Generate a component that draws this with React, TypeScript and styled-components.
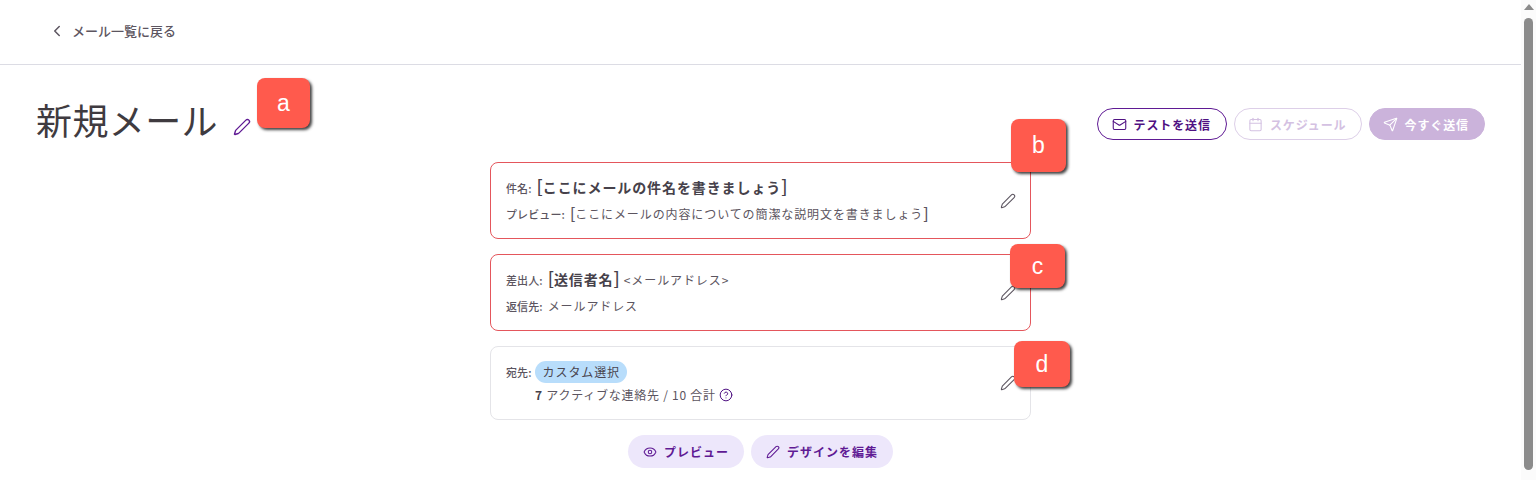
import styled, { createGlobalStyle } from 'styled-components';
import { Calendar, ChevronLeft, CircleHelp, Eye, Mail, Pen, Send } from 'lucide-react';

const GlobalStyle = createGlobalStyle`
  html, body {
    margin: 0;
    padding: 0;
    height: 480px;
    overflow: hidden;
    background: #ffffff;
  }
  * {
    box-sizing: border-box;
  }
  body {
    font-family: "Noto Sans CJK JP", sans-serif;
    color: #4a4550;
  }
`;

const Page = styled.div`
  display: flex;
  height: 480px;
  overflow: hidden;
`;

const Main = styled.main`
  position: relative;
  flex: 1;
  min-width: 0;
`;

const TopBar = styled.div`
  display: flex;
  align-items: center;
  height: 65px;
  padding: 0 0 3px 48px;
  border-bottom: 1px solid #dcdce4;
`;

const BackLink = styled.a`
  display: flex;
  align-items: center;
  gap: 6px;
  font-size: 13px;
  font-weight: 500;
  color: #5c5560;
`;

const HeadRow = styled.div`
  display: flex;
  justify-content: space-between;
  align-items: flex-start;
  height: 97px;
  padding: 32px 36px 0;
`;

const TitleGroup = styled.div`
  display: flex;
  align-items: center;
  gap: 15px;
`;

const Title = styled.h1`
  margin: 0;
  font-size: 36px;
  line-height: 44px;
  font-weight: 400;
  letter-spacing: 0.4px;
  color: #3f3b40;
`;

const TitleEdit = styled.span`
  display: flex;
  margin-top: 16px;
  color: #5f1a94;
`;

const Actions = styled.div`
  display: flex;
  gap: 7px;
  margin-top: 11px;
`;

const ActionButton = styled.button<{ $variant: 'outline' | 'muted' | 'solid' }>`
  display: flex;
  align-items: center;
  gap: ${(p) => (p.$variant === 'solid' ? 6 : 7)}px;
  height: 32px;
  padding: 0 15px 0 ${(p) => (p.$variant === 'outline' ? 14 : 13)}px;
  border-radius: 16px;
  font-family: inherit;
  font-size: 12px;
  font-weight: 700;
  letter-spacing: 0.9px;
  background: ${(p) => (p.$variant === 'solid' ? '#cbb3db' : '#ffffff')};
  color: ${(p) => (p.$variant === 'outline' ? '#4f1182' : p.$variant === 'muted' ? '#d4c1e2' : '#ffffff')};
  border: 1px solid ${(p) => (p.$variant === 'outline' ? '#5f1a94' : p.$variant === 'muted' ? '#ddcfe8' : '#cbb3db')};
`;

const Center = styled.div`
  display: flex;
  flex-direction: column;
  align-items: center;
`;

const Card = styled.section<{ $error?: boolean; $height: number }>`
  display: flex;
  align-items: center;
  justify-content: space-between;
  width: 541px;
  height: ${(p) => p.$height}px;
  margin-bottom: 15px;
  padding: 0 14px 0 15px;
  border-radius: 8px;
  background: #ffffff;
  border: 1px solid ${(p) => (p.$error ? '#e4565c' : '#e4e4e8')};
`;

const CardBody = styled.div<{ $gap: number }>`
  display: flex;
  flex-direction: column;
  gap: ${(p) => p.$gap}px;
`;

const Row = styled.div`
  display: flex;
  align-items: center;
  gap: 5px;
  height: 22px;
`;

const Label = styled.span`
  font-size: 11px;
  font-weight: 500;
  letter-spacing: 0.1px;
  color: #5c5560;
`;

const Strong = styled.span`
  font-size: 14px;
  line-height: 20px;
  margin-top: -1px;
  font-weight: 700;
  letter-spacing: 0.9px;
  color: #46414a;
`;

const Value = styled.span`
  font-size: 12px;
  line-height: 18px;
  letter-spacing: 0.9px;
  color: #5c5560;
`;

const Address = styled(Value)`
  margin-left: -1px;
`;

const Bracket = styled.span`
  font-size: 1.25em;
  line-height: 1;
  font-weight: 500;
  letter-spacing: 0;
`;

const Chip = styled.span`
  display: flex;
  align-items: center;
  height: 22px;
  margin-left: -2px;
  padding: 0 7px 0 8px;
  border-radius: 11px;
  background: #b8ddfb;
  font-size: 12px;
  letter-spacing: 0.9px;
  color: #4a4550;
`;

const Stats = styled.div`
  display: flex;
  align-items: center;
  gap: 3px;
  height: 22px;
  padding-left: 29px;
  font-size: 12px;
  letter-spacing: 0.75px;
  color: #5c5560;

  b {
    font-weight: 700;
    color: #46414a;
  }
`;

const HelpIcon = styled.span`
  display: flex;
  color: #4f1182;
`;

const EditIcon = styled.span`
  display: flex;
  color: #5c5560;
`;

const Footer = styled.div`
  display: flex;
  gap: 7px;
`;

const SoftButton = styled.button`
  display: flex;
  align-items: center;
  gap: 7px;
  height: 33px;
  padding: 0 15px;
  border: none;
  border-radius: 17px;
  background: #ede7fb;
  font-family: inherit;
  font-size: 12px;
  font-weight: 700;
  letter-spacing: 1px;
  color: #5f1a94;
`;

const Badge = styled.div<{ $left: number; $top: number; $w: number; $h: number }>`
  position: absolute;
  left: ${(p) => p.$left}px;
  top: ${(p) => p.$top}px;
  width: ${(p) => p.$w}px;
  height: ${(p) => p.$h}px;
  display: flex;
  align-items: center;
  justify-content: center;
  border-radius: 8px;
  background: #ff5a4d;
  box-shadow: 2px 2px 3px rgba(0, 0, 0, 0.75);
  font-family: "Liberation Sans", Arial, sans-serif;
  font-size: 23px;
  color: #ffffff;
`;

const ScrollRail = styled.div`
  display: flex;
  flex-direction: column;
  align-items: center;
  width: 15px;
  padding-top: 4px;
  background: #fbfbfb;
`;

const ScrollArrow = styled.div`
  width: 0;
  height: 0;
  border-left: 5px solid transparent;
  border-right: 5px solid transparent;
  border-bottom: 6px solid #8b8b8b;
`;

const ScrollThumb = styled.div`
  width: 9px;
  height: 452px;
  margin-top: 8px;
  border-radius: 5px;
  background: #8b8b8b;
`;

export default function App() {
  return (
    <Page>
      <GlobalStyle />
      <Main>
        <TopBar>
          <BackLink>
            <ChevronLeft size={18} strokeWidth={2} />
            メール一覧に戻る
          </BackLink>
        </TopBar>
        <HeadRow>
          <TitleGroup>
            <Title>新規メール</Title>
            <TitleEdit>
              <Pen size={18} strokeWidth={1.8} />
            </TitleEdit>
          </TitleGroup>
          <Actions>
            <ActionButton $variant="outline">
              <Mail size={15} strokeWidth={1.7} />
              テストを送信
            </ActionButton>
            <ActionButton $variant="muted">
              <Calendar size={15} strokeWidth={1.7} />
              スケジュール
            </ActionButton>
            <ActionButton $variant="solid">
              <Send size={15} strokeWidth={1.7} />
              今すぐ送信
            </ActionButton>
          </Actions>
        </HeadRow>
        <Center>
          <Card $error $height={77}>
            <CardBody $gap={4}>
              <Row>
                <Label>件名:</Label>
                <Strong>
                  <Bracket>[</Bracket>ここにメールの件名を書きましょう<Bracket>]</Bracket>
                </Strong>
              </Row>
              <Row>
                <Label>プレビュー:</Label>
                <Value>
                  <Bracket>[</Bracket>ここにメールの内容についての簡潔な説明文を書きましょう<Bracket>]</Bracket>
                </Value>
              </Row>
            </CardBody>
            <EditIcon>
              <Pen size={16} strokeWidth={1.6} />
            </EditIcon>
          </Card>
          <Card $error $height={77}>
            <CardBody $gap={4}>
              <Row>
                <Label>差出人:</Label>
                <Strong>
                  <Bracket>[</Bracket>送信者名<Bracket>]</Bracket>
                </Strong>
                <Address>&lt;メールアドレス&gt;</Address>
              </Row>
              <Row>
                <Label>返信先:</Label>
                <Value>メールアドレス</Value>
              </Row>
            </CardBody>
            <EditIcon>
              <Pen size={16} strokeWidth={1.6} />
            </EditIcon>
          </Card>
          <Card $height={74}>
            <CardBody $gap={1}>
              <Row>
                <Label>宛先:</Label>
                <Chip>カスタム選択</Chip>
              </Row>
              <Stats>
                <span>
                  <b>7</b> アクティブな連絡先 / 10 合計
                </span>
                <HelpIcon>
                  <CircleHelp size={14} strokeWidth={1.7} />
                </HelpIcon>
              </Stats>
            </CardBody>
            <EditIcon>
              <Pen size={16} strokeWidth={1.6} />
            </EditIcon>
          </Card>
          <Footer>
            <SoftButton>
              <Eye size={14} strokeWidth={1.8} />
              プレビュー
            </SoftButton>
            <SoftButton>
              <Pen size={14} strokeWidth={1.8} />
              デザインを編集
            </SoftButton>
          </Footer>
        </Center>
        <Badge $left={257} $top={78} $w={53} $h={50}>a</Badge>
        <Badge $left={1011} $top={119} $w={55} $h={53}>b</Badge>
        <Badge $left={1010} $top={244} $w={55} $h={44}>c</Badge>
        <Badge $left={1014} $top={341} $w={56} $h={46}>d</Badge>
      </Main>
      <ScrollRail>
        <ScrollArrow />
        <ScrollThumb />
      </ScrollRail>
    </Page>
  );
}
